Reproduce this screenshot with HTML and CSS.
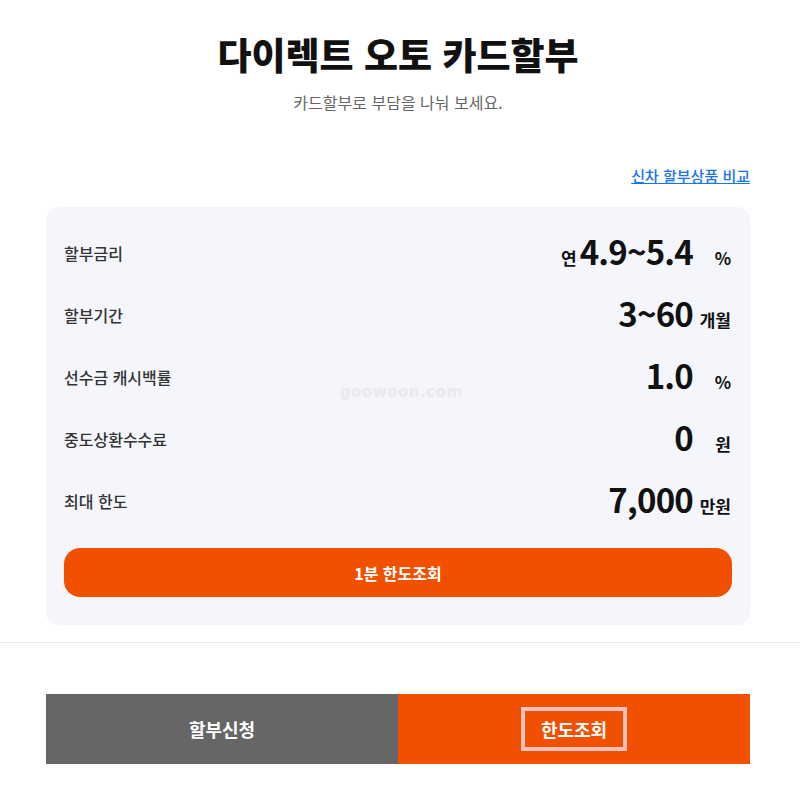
FILE: index.html
```html
<!DOCTYPE html>
<html lang="ko">
<head>
    <meta charset="UTF-8">
    <meta name="viewport" content="width=device-width, initial-scale=1.0">
    <title>다이렉트 오토 카드할부</title>
    <link rel="stylesheet" href="styles.css">
</head>
<body>

    <div class="page">
        <h2 class="title">다이렉트 오토 카드할부</h2>
        <p class="subtitle">카드할부로 부담을 나눠 보세요.</p>

        <div class="link-row">
            <a href="#" class="compare-link">신차 할부상품 비교</a>
        </div>

        <div class="card">
            <div class="row">
                <span class="label">할부금리</span>
                <span class="value"><span class="prefix">연</span><span class="num">4.9~5.4</span><span class="unit">%</span></span>
            </div>
            <div class="row">
                <span class="label">할부기간</span>
                <span class="value"><span class="num">3~60</span><span class="unit">개월</span></span>
            </div>
            <div class="row">
                <span class="label">선수금 캐시백률</span>
                <span class="value"><span class="num">1.0</span><span class="unit">%</span></span>
            </div>
            <div class="row">
                <span class="label">중도상환수수료</span>
                <span class="value"><span class="num">0</span><span class="unit">원</span></span>
            </div>
            <div class="row">
                <span class="label">최대 한도</span>
                <span class="value"><span class="num">7,000</span><span class="unit">만원</span></span>
            </div>

            <button class="limit-btn">1분 한도조회</button>

            <span class="watermark">goowoon.com</span>
        </div>
    </div>

    <hr class="divider">

    <div class="page">
        <div class="bottom-bar">
            <a href="#" class="bar-btn bar-apply">할부신청</a>
            <a href="#" class="bar-btn bar-limit"><span class="highlight">한도조회</span></a>
        </div>
    </div>

</body>
</html>
```

FILE: styles.css
```css
body {
    font-family: "Noto Sans CJK KR", "Noto Sans", sans-serif;
    margin: 0;
    color: #222;
    background: #fff;
}

.page {
    width: 704px;
    margin: 0 0 0 46px;
}

.title {
    margin: 30px 0 0;
    font-size: 37px;
    line-height: 49px;
    font-weight: 800;
    text-align: center;
    color: #111;
}

.subtitle {
    margin: 12px 0 0;
    font-size: 16px;
    line-height: 22px;
    text-align: center;
    color: #666;
}

.link-row {
    margin-top: 52px;
    text-align: right;
    line-height: 20px;
}

.compare-link {
    font-size: 15px;
    font-weight: 500;
    color: #1a73e8;
    text-decoration: underline;
}

.card {
    position: relative;
    margin-top: 21px;
    padding: 15px 18px 28px;
    background-color: #f4f6fb;
    border-radius: 12px;
}

.row {
    display: flex;
    justify-content: space-between;
    align-items: center;
    height: 62px;
}

.label {
    font-size: 16px;
    font-weight: 500;
    color: #333;
}

.value {
    display: flex;
    align-items: baseline;
    line-height: 1;
    margin-top: -4px;
    color: #111;
    font-weight: 700;
}

.prefix {
    font-size: 17px;
    margin-right: 3px;
}

.num {
    font-size: 33px;
    letter-spacing: -0.8px;
}

.unit {
    min-width: 38px;
    padding-right: 1px;
    text-align: right;
    font-size: 17px;
}

.limit-btn {
    display: block;
    width: 100%;
    height: 49px;
    margin-top: 16px;
    border: none;
    border-radius: 16px;
    background-color: #f05000;
    color: #fff;
    font-family: inherit;
    font-size: 16px;
    font-weight: 700;
    cursor: pointer;
}

.watermark {
    position: absolute;
    left: 294px;
    top: 176px;
    font-family: "DejaVu Sans", sans-serif;
    font-size: 15px;
    font-weight: 700;
    letter-spacing: 0.5px;
    color: #e9e9ee;
}

.divider {
    margin: 17px 0 0;
    border: none;
    border-top: 1px solid #ebebeb;
}

.bottom-bar {
    display: flex;
    margin-top: 51px;
    height: 70px;
}

.bar-btn {
    flex: 1;
    display: flex;
    align-items: center;
    justify-content: center;
    color: #fff;
    font-size: 18px;
    font-weight: 700;
    text-decoration: none;
}

.bar-apply {
    background-color: #666;
}

.bar-limit {
    background-color: #f05000;
}

.highlight {
    padding: 5px 16px;
    border: 4px solid #ffc0bb;
}
```
